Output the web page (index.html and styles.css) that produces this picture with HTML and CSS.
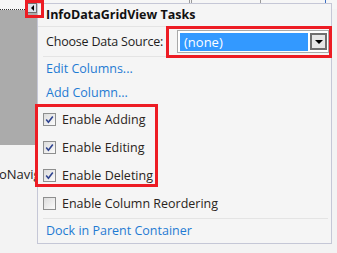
FILE: index.html
```html
<!DOCTYPE html>
<html>
<head>
<meta charset="utf-8">
<link rel="stylesheet" href="styles.css">
</head>
<body>
<div class="canvas">
  <div class="top-strip">
    <span class="gl gl1"></span><span class="gl gl2"></span><span class="gl gl3"></span><span class="gl gl4"></span>
  </div>
  <div class="dots"></div>
  <div class="gray-area"></div>
  <div class="nav-label">oNavigator</div>

  <div class="smart-tag"><span class="tri-left"></span></div>

  <div class="panel">
    <div class="header">InfoDataGridView Tasks</div>
    <div class="row choose">
      <span class="label">Choose Data Source:</span>
      <div class="combo">
        <span class="combo-value">(none)</span>
        <span class="combo-btn"><span class="tri-down"></span></span>
      </div>
    </div>
    <div class="sep"></div>
    <div class="links">
      <a class="link link-edit">Edit Columns...</a>
      <a class="link link-add">Add Column...</a>
    </div>
    <div class="gap"></div>
    <div class="checks">
      <div class="check-row"><span class="cb checked"><svg width="11" height="11" viewBox="0 0 11 11"><path d="M2.2 5.6 L4.4 8.2 L8.8 2.4" fill="none" stroke="#2f4490" stroke-width="1.6"/></svg></span><span>Enable Adding</span></div>
      <div class="check-row"><span class="cb checked"><svg width="11" height="11" viewBox="0 0 11 11"><path d="M2.2 5.6 L4.4 8.2 L8.8 2.4" fill="none" stroke="#2f4490" stroke-width="1.6"/></svg></span><span>Enable Editing</span></div>
      <div class="check-row"><span class="cb checked"><svg width="11" height="11" viewBox="0 0 11 11"><path d="M2.2 5.6 L4.4 8.2 L8.8 2.4" fill="none" stroke="#2f4490" stroke-width="1.6"/></svg></span><span>Enable Deleting</span></div>
      <div class="check-row tall"><span class="cb"></span><span>Enable Column Reordering</span></div>
    </div>
    <div class="sep"></div>
    <div class="dock-row"><a class="link">Dock in Parent Container</a></div>
  </div>

  <div class="mark mark-tag"></div>
  <div class="mark mark-combo"></div>
  <div class="mark mark-checks"></div>
</div>
</body>
</html>
```
FILE: styles.css
```css
html, body {
  margin: 0;
  padding: 0;
}
body {
  width: 337px;
  height: 253px;
  overflow: hidden;
  background: #f3f3f3;
  font-family: "Open Sans", "Noto Sans", sans-serif;
  font-size: 12.5px;
  color: #1e1e1e;
}
.canvas {
  position: relative;
  width: 337px;
  height: 253px;
}
.top-strip {
  position: absolute;
  left: 0;
  top: 0;
  width: 337px;
  height: 9px;
  background: #f6f6f6;
}
.gl {
  position: absolute;
  top: 0;
  width: 1px;
  height: 4px;
  background: #9a9a9a;
}
.gl1 { left: 189px; }
.gl2 { left: 191px; }
.gl3 { left: 260px; }
.gl4 { left: 325px; background: #3b6fc4; }
.dots {
  position: absolute;
  left: 0;
  top: 9px;
  width: 26px;
  height: 1px;
  background: repeating-linear-gradient(90deg, #333 0 1px, transparent 1px 2px);
}
.gray-area {
  position: absolute;
  left: 0;
  top: 10px;
  width: 38px;
  height: 135px;
  background: #ababab;
}
.nav-label {
  position: absolute;
  left: -1px;
  top: 165px;
  font-size: 13px;
  color: #1e1e1e;
}
.smart-tag {
  position: absolute;
  left: 27px;
  top: 3px;
  width: 10px;
  height: 10px;
  box-sizing: border-box;
  border: 1px solid #6f6f6f;
  background: #dde2ec;
  display: flex;
  align-items: center;
  justify-content: center;
}
.tri-left {
  width: 0;
  height: 0;
  border-top: 3px solid transparent;
  border-bottom: 3px solid transparent;
  border-right: 3px solid #000;
}
.panel {
  position: absolute;
  left: 37px;
  top: 3px;
  width: 295px;
  height: 241px;
  box-sizing: border-box;
  border: 1px solid #c5c7d6;
  background: #f5f5f5;
  display: flex;
  flex-direction: column;
}
.header {
  height: 22px;
  padding-left: 8px;
  font-weight: 700;
  font-size: 12.5px;
  color: #111;
  line-height: 22px;
  border-bottom: 1px solid #e4e4e4;
}
.row.choose {
  height: 29px;
  display: flex;
  align-items: center;
  padding-left: 8px;
  padding-right: 2px;
}
.label {
  flex: 1;
  letter-spacing: -0.2px;
}
.combo {
  width: 152px;
  height: 23px;
  box-sizing: border-box;
  border: 1px solid #a9a9a9;
  background: #fff;
  padding: 2px 1px 1px 2px;
  display: flex;
  gap: 2px;
  margin-top: -1px;
}
.combo-value {
  flex: 1;
  background: #3399ff;
  color: #fff;
  font-size: 13px;
  line-height: 18px;
  padding-left: 4px;
}
.combo-btn {
  width: 17px;
  height: 17px;
  box-sizing: border-box;
  border: 2px solid #6e6e6e;
  background: #e6e6e6;
  display: flex;
  align-items: center;
  justify-content: center;
}
.tri-down {
  width: 0;
  height: 0;
  border-left: 4px solid transparent;
  border-right: 4px solid transparent;
  border-top: 4px solid #000;
  margin-top: 1px;
}
.sep {
  height: 1px;
  background: #e4e4e4;
  margin: 0 3px 0 5px;
}
.gap {
  height: 1px;
}
.links {
  display: flex;
  flex-direction: column;
  padding-left: 8px;
}
.link {
  color: #1f7bd3;
  text-decoration: none;
}
.link-edit {
  height: 24px;
  line-height: 24px;
}
.link-add {
  height: 23px;
  line-height: 23px;
}
.checks {
  display: flex;
  flex-direction: column;
  padding-left: 5px;
}
.check-row {
  height: 28px;
  display: flex;
  align-items: center;
  gap: 6px;
  color: #2a2420;
}
.check-row.tall {
  height: 29px;
}
.cb {
  width: 13px;
  height: 13px;
  box-sizing: border-box;
  border: 1px solid #8e8f8f;
  background: linear-gradient(135deg, #dcdcdc, #fbfbfb);
  display: flex;
  align-items: center;
  justify-content: center;
}
.dock-row {
  height: 24px;
  line-height: 24px;
  padding-left: 8px;
}
.mark {
  position: absolute;
  box-sizing: border-box;
  border: 3px solid #ed1c24;
}
.mark-tag {
  left: 25px;
  top: 0;
  width: 19px;
  height: 18px;
}
.mark-combo {
  left: 166px;
  top: 26px;
  width: 166px;
  height: 32px;
}
.mark-checks {
  left: 35px;
  top: 104px;
  width: 123px;
  height: 83px;
}
```
